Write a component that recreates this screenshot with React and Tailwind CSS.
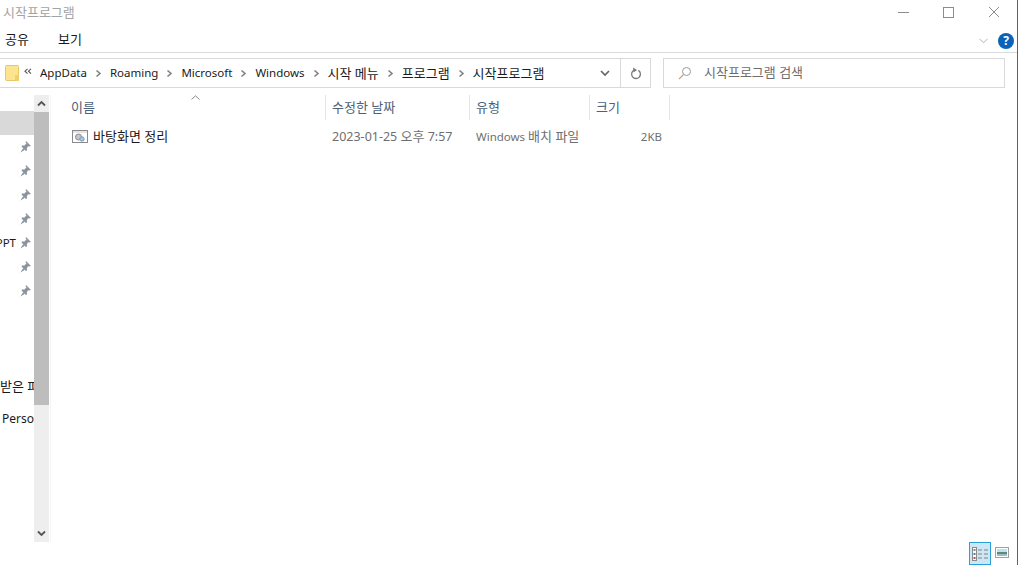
import React from "react";

function K({ children }) {
  return <span className="text-[13px]">{children}</span>;
}

function Chevron() {
  return (
    <svg width="7" height="9" viewBox="0 0 7 9" className="ml-[8px] mr-[8px] shrink-0">
      <path d="M1.5 1.5 L5 4.5 L1.5 7.5" fill="none" stroke="#808080" strokeWidth="1.6" />
    </svg>
  );
}

function Pin() {
  return (
    <svg width="11" height="12" viewBox="0 0 11 12" className="shrink-0">
      <path d="M6 0 L11 5 L9.8 5.6 L8.6 5 L6.8 7 L7 9.5 L6 10 L1.5 5.5 L2 4.5 L4.4 4.6 L6.4 2.4 L5.6 1.2 Z M3.2 7 L0.5 11.5 L5 8.8 Z" fill="#8b939c" />
    </svg>
  );
}

function PinRow({ label }) {
  return (
    <div className="h-[24px] flex items-center justify-end pr-[3px] gap-[4px] overflow-hidden">
      {label && <span className="text-[11.5px] text-[#1a1a1a] whitespace-nowrap">{label}</span>}
      <Pin />
    </div>
  );
}

function Sep() {
  return <div className="w-px h-[25px] bg-[#e5e5e5] shrink-0" />;
}

function HeaderCell({ label, width, pl }) {
  return (
    <div className={`flex items-center justify-between h-[25px] ${width}`}>
      <span className={`text-[13px] text-[#4c607a] ${pl}`}>{label}</span>
      <Sep />
    </div>
  );
}

export default function App() {
  return (
    <div className="w-[1018px] h-[565px] bg-white overflow-hidden flex flex-col border-r border-[#5a6470] font-['Noto_Sans','Noto_Sans_CJK_KR',sans-serif] text-[11.5px] leading-none">
      {/* title bar */}
      <div className="h-[24px] flex items-center justify-between shrink-0">
        <span className="pl-[3px] text-[13px] text-[#a3a3a3]">시작프로그램</span>
        <div className="flex items-center mr-[17px] gap-[34px]">
          <svg width="11" height="11" viewBox="0 0 11 11"><path d="M0 5.5 H11" stroke="#8c8c8c" strokeWidth="1" /></svg>
          <svg width="11" height="11" viewBox="0 0 11 11"><rect x="0.5" y="0.5" width="10" height="10" fill="none" stroke="#8c8c8c" /></svg>
          <svg width="12" height="12" viewBox="0 0 12 12"><path d="M1 1 L11 11 M11 1 L1 11" stroke="#8c8c8c" strokeWidth="1" /></svg>
        </div>
      </div>

      {/* ribbon tabs */}
      <div className="h-[29px] flex items-center justify-between border-b border-[#dadada] shrink-0 pt-[3px]">
        <div className="flex items-center pl-[5px] gap-[29px] text-[#1a1a1a] text-[13px]">
          <span>공유</span>
          <span>보기</span>
        </div>
        <div className="flex items-center gap-[10px] mr-[3px] mt-[2px]">
          <svg width="9" height="6" viewBox="0 0 9 6"><path d="M0.5 0.8 L4.5 4.8 L8.5 0.8" fill="none" stroke="#b3b3b3" /></svg>
          <div className="w-[16px] h-[16px] rounded-full bg-[#0a63b8] flex items-center justify-center text-white text-[12px] font-bold">?</div>
        </div>
      </div>

      {/* address row */}
      <div className="h-[30px] mt-[5px] flex shrink-0">
        <div className="w-[651px] flex border border-l-0 border-[#d9d9d9] items-center">
          <div className="flex-1 flex items-center text-[#1a1a1a] whitespace-nowrap">
            <svg width="14" height="16" viewBox="0 0 14 16" className="ml-[5px] shrink-0">
              <rect x="0.5" y="0.5" width="13" height="15" rx="1" fill="#fde58f" stroke="#e8c76a" />
              <rect x="10" y="10" width="4" height="6" fill="#f3cf6b" />
            </svg>
            <svg width="8" height="7" viewBox="0 0 8 7" className="ml-[5px] mr-[8px] shrink-0 relative top-[-2px]">
              <path d="M3.5 0.8 L1 3.2 L3.5 5.6 M7 0.8 L4.5 3.2 L7 5.6" fill="none" stroke="#555" strokeWidth="1.1" />
            </svg>
            <span>AppData</span><Chevron />
            <span>Roaming</span><Chevron />
            <span>Microsoft</span><Chevron />
            <span>Windows</span><Chevron />
            <K>시작 메뉴</K><Chevron />
            <K>프로그램</K><Chevron />
            <K>시작프로그램</K>
          </div>
          <div className="w-[30px] flex justify-center shrink-0">
            <svg width="10" height="7" viewBox="0 0 10 7"><path d="M1 1 L5 5 L9 1" fill="none" stroke="#666" strokeWidth="1.7" /></svg>
          </div>
          <div className="w-[30px] h-full flex items-center justify-center border-l border-[#d9d9d9] shrink-0">
            <svg width="12" height="13" viewBox="0 0 12 13">
              <path d="M4 3.2 A4.4 4.4 0 1 0 8.4 3.4" fill="none" stroke="#7a7a7a" strokeWidth="1.3" />
              <path d="M3 0.5 L7 3 L3.6 5.5 Z" fill="#7a7a7a" />
            </svg>
          </div>
        </div>
        <div className="ml-[12px] w-[342px] flex items-center border border-[#d9d9d9]">
          <svg width="14" height="14" viewBox="0 0 14 14" className="ml-[14px]">
            <circle cx="8.5" cy="5.5" r="4" fill="none" stroke="#9a9a9a" />
            <path d="M5.5 8.5 L1 13" stroke="#c9a58f" strokeWidth="1.2" />
          </svg>
          <span className="ml-[12px] pb-[1px] text-[13px] text-[#6d6d6d]">시작프로그램 검색</span>
        </div>
      </div>

      {/* body */}
      <div className="flex-1 flex mt-[7px] min-h-0">
        <aside className="w-[34px] shrink-0 overflow-hidden pt-[16px]">
          <div className="h-[24px] bg-[#d9d9d9]" />
          <PinRow />
          <PinRow />
          <PinRow />
          <PinRow />
          <PinRow label="PPT" />
          <PinRow />
          <PinRow />
          <div className="h-[72px]" />
          <div className="h-[24px] flex items-center whitespace-nowrap pb-[1px] text-[13px] text-[#1a1a1a]">받은 파일</div>
          <div className="h-[8px]" />
          <div className="h-[24px] flex items-center whitespace-nowrap pl-[2px] text-[12px] text-[#1a1a1a]">Personal</div>
        </aside>

        <div className="w-[15px] h-[447px] shrink-0 bg-[#eeeeee] flex flex-col">
          <div className="h-[17px] flex items-center justify-center">
            <svg width="9" height="7" viewBox="0 0 9 7"><path d="M1 5.5 L4.5 2 L8 5.5" fill="none" stroke="#555" strokeWidth="1.8" /></svg>
          </div>
          <div className="h-[293px] bg-[#bdbdbd]" />
          <div className="flex-1" />
          <div className="h-[17px] flex items-center justify-center">
            <svg width="9" height="7" viewBox="0 0 9 7"><path d="M1 1.5 L4.5 5 L8 1.5" fill="none" stroke="#555" strokeWidth="1.8" /></svg>
          </div>
        </div>

        <div className="w-[1px] h-[447px] ml-[1px] bg-[#f4f4f4] shrink-0" />

        <main className="flex-1 flex flex-col relative">
          <svg width="9" height="5" viewBox="0 0 9 5" className="absolute left-[140px] top-0">
            <path d="M0.5 4.5 L4.5 0.8 L8.5 4.5" fill="none" stroke="#8a8a8a" />
          </svg>
          <div className="flex">
            <HeaderCell label="이름" width="w-[275px]" pl="pl-[20px]" />
            <HeaderCell label="수정한 날짜" width="w-[144px]" pl="pl-[6px]" />
            <HeaderCell label="유형" width="w-[120px]" pl="pl-[6px]" />
            <HeaderCell label="크기" width="w-[80px]" pl="pl-[6px]" />
          </div>
          <div className="flex items-center h-[22px] mt-[5px] pt-[1px]">
            <div className="w-[275px] flex items-center pl-[21px] text-[#1a1a1a]">
              <svg width="16" height="13" viewBox="0 0 16 13" className="shrink-0">
                <rect x="0.5" y="0.5" width="15" height="12" fill="#fff" stroke="#8a8a8a" />
                <path d="M1 2 H15" stroke="#c9c9c9" />
                <circle cx="6.5" cy="7" r="3" fill="#c4c8cc" stroke="#8a8f94" />
                <circle cx="10" cy="9" r="2.2" fill="#a8c8e0" stroke="#7d9bb0" />
              </svg>
              <span className="ml-[5px] text-[13px]">바탕화면 정리</span>
            </div>
            <span className="w-[144px] pl-[6px] text-[12.5px] text-[#6f6f6f] whitespace-nowrap">2023-01-25 <K>오후</K> 7:57</span>
            <span className="w-[120px] pl-[6px] text-[#6f6f6f] whitespace-nowrap">Windows <K>배치 파일</K></span>
            <span className="w-[81px] pr-[9px] text-right text-[#6f6f6f]">2KB</span>
          </div>

          {/* view switch */}
          <div className="mt-auto flex justify-end items-center pr-[8px] gap-[4px] h-[23px]">
            <div className="w-[22px] h-[23px] bg-[#cce8f7] border-[1.5px] border-[#2b9fd9] flex items-center justify-center">
              <svg width="16" height="14" viewBox="0 0 16 14">
                <rect x="0.5" y="0.5" width="4" height="13" fill="#fff" stroke="#8a8a8a" />
                <rect x="1.5" y="2" width="2" height="2" fill="#7a8a9a" />
                <rect x="1.5" y="6" width="2" height="2" fill="#4f7fb5" />
                <rect x="1.5" y="10" width="2" height="2" fill="#b55050" />
                <path d="M6 3 H10 M12 3 H16 M6 7 H10 M12 7 H16 M6 11 H10 M12 11 H16" stroke="#808080" strokeWidth="1.2" />
              </svg>
            </div>
            <svg width="14" height="11" viewBox="0 0 14 11" className="mb-[2px]">
              <rect x="0.5" y="0.5" width="13" height="10" fill="#fff" stroke="#a0a0a0" />
              <rect x="2" y="2" width="10" height="3" fill="#bfe0ee" />
              <rect x="2" y="5" width="10" height="2" fill="#5d8a75" />
              <rect x="2" y="7" width="10" height="2" fill="#9db8c8" />
            </svg>
          </div>
        </main>
      </div>
    </div>
  );
}
